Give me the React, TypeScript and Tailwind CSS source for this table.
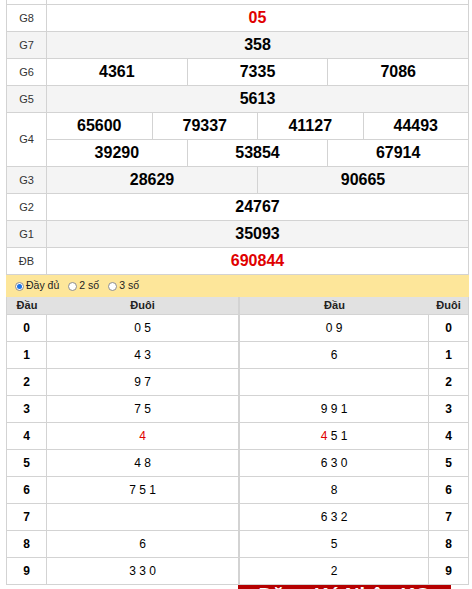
const prizes = [
  { label: "G8", lines: [["05"]], red: true },
  { label: "G7", lines: [["358"]] },
  { label: "G6", lines: [["4361", "7335", "7086"]] },
  { label: "G5", lines: [["5613"]] },
  {
    label: "G4",
    lines: [
      ["65600", "79337", "41127", "44493"],
      ["39290", "53854", "67914"],
    ],
  },
  { label: "G3", lines: [["28629", "90665"]] },
  { label: "G2", lines: [["24767"]] },
  { label: "G1", lines: [["35093"]] },
  { label: "ĐB", lines: [["690844"]], red: true },
];

const leftLoto = [
  ["0", "0 5"],
  ["1", "4 3"],
  ["2", "9 7"],
  ["3", "7 5"],
  ["4", "4"],
  ["5", "4 8"],
  ["6", "7 5 1"],
  ["7", ""],
  ["8", "6"],
  ["9", "3 3 0"],
];

const rightLoto = [
  ["0 9", "0"],
  ["6", "1"],
  ["", "2"],
  ["9 9 1", "3"],
  ["4 5 1", "4"],
  ["6 3 0", "5"],
  ["8", "6"],
  ["6 3 2", "7"],
  ["5", "8"],
  ["2", "9"],
];

function PrizeRow({
  label,
  lines,
  red,
  shaded,
}: {
  label: string;
  lines: string[][];
  red?: boolean;
  shaded: boolean;
}) {
  return (
    <div
      className={`flex border-b border-[#d3d3d3] ${shaded ? "bg-[#f4f4f4]" : "bg-white"}`}
    >
      <div className="w-[40px] shrink-0 border-r border-[#d3d3d3] flex items-center justify-center text-[11px] text-[#333]">
        {label}
      </div>
      <div className="flex-1 flex flex-col">
        {lines.map((line, i) => (
          <div
            key={i}
            className={
              i < lines.length - 1
                ? "flex h-[27px] border-b border-[#d3d3d3]"
                : "flex h-[26px]"
            }
          >
            {line.map((n, j) => (
              <div
                key={n}
                className={`flex-1 flex items-center justify-center text-[16px] font-bold ${
                  red ? "text-[#e00000]" : "text-black"
                } ${j > 0 ? "border-l border-[#d3d3d3]" : ""}`}
              >
                {n}
              </div>
            ))}
          </div>
        ))}
      </div>
    </div>
  );
}

function Radio({ checked, label }: { checked?: boolean; label: string }) {
  return (
    <span className="flex items-center gap-[2px]">
      <span className="w-[9px] h-[9px] rounded-full border border-[#8d8d8d] bg-white flex items-center justify-center">
        {checked && <span className="w-[5px] h-[5px] rounded-full bg-[#1a73e8]" />}
      </span>
      <span>{label}</span>
    </span>
  );
}

function Digits({ text }: { text: string }) {
  // first digit "4" on the 4 row is highlighted
  if (text.startsWith("4") && text.length > 1) {
    return (
      <span>
        <span className="text-[#e00000]">4</span>
        {text.slice(1)}
      </span>
    );
  }
  return <span>{text}</span>;
}

export default function App() {
  return (
    <div className="pl-[6px] bg-white font-['Liberation_Sans',Arial,sans-serif] text-black">
      <div className="w-[463px] border-l border-r border-[#d3d3d3]">
        {/* tail of the header row above */}
        <div className="flex h-[5px] border-b border-[#d3d3d3]">
          <div className="w-[40px] border-r border-[#d3d3d3]" />
        </div>
        {prizes.map((p, i) => (
          <PrizeRow
            key={p.label}
            label={p.label}
            lines={p.lines}
            red={p.red}
            shaded={i % 2 === 1}
          />
        ))}
      </div>

      {/* loto options */}
      <div className="w-[463px] h-[22px] bg-[#fde69a] flex items-center gap-[9px] pl-[9px] text-[10.5px] text-[#222]">
        <Radio checked label="Đầy đủ" />
        <Radio label="2 số" />
        <Radio label="3 số" />
      </div>

      <div className="flex w-[463px]">
        {/* đầu table */}
        <div className="w-[233px] border-l border-r border-[#d3d3d3]">
          <div className="flex h-[18px] bg-[#e1e1e1] border-b border-[#d3d3d3] text-[11px] font-bold text-[#222]">
            <div className="w-[40px] flex items-center justify-center">Đầu</div>
            <div className="flex-1 flex items-center justify-center">Đuôi</div>
          </div>
          {leftLoto.map(([head, tails]) => (
            <div key={head} className="flex h-[27px] border-b border-[#d3d3d3] text-[12px]">
              <div className="w-[40px] border-r border-[#d3d3d3] flex items-center justify-center font-bold">
                {head}
              </div>
              <div
                className={`flex-1 flex items-center justify-center ${
                  head === "4" ? "text-[#e00000]" : ""
                }`}
              >
                {tails}
              </div>
            </div>
          ))}
        </div>

        {/* đuôi table */}
        <div className="w-[230px] border-l border-r border-[#d3d3d3]">
          <div className="flex h-[18px] bg-[#e1e1e1] border-b border-[#d3d3d3] text-[11px] font-bold text-[#222]">
            <div className="flex-1 flex items-center justify-center">Đầu</div>
            <div className="w-[39px] flex items-center justify-center">Đuôi</div>
          </div>
          {rightLoto.map(([heads, tail]) => (
            <div key={tail} className="flex h-[27px] border-b border-[#d3d3d3] text-[12px]">
              <div className="flex-1 border-r border-[#d3d3d3] flex items-center justify-center">
                <Digits text={heads} />
              </div>
              <div className="w-[39px] flex items-center justify-center font-bold">{tail}</div>
            </div>
          ))}
        </div>
      </div>

      {/* banner peeking in at the bottom */}
      <div className="ml-[232px] w-[213px] h-[30px] bg-[#b50000] text-white font-bold text-[20px] leading-[20px] text-center">
        Đăng Ký Nhận KQ
      </div>
    </div>
  );
}
